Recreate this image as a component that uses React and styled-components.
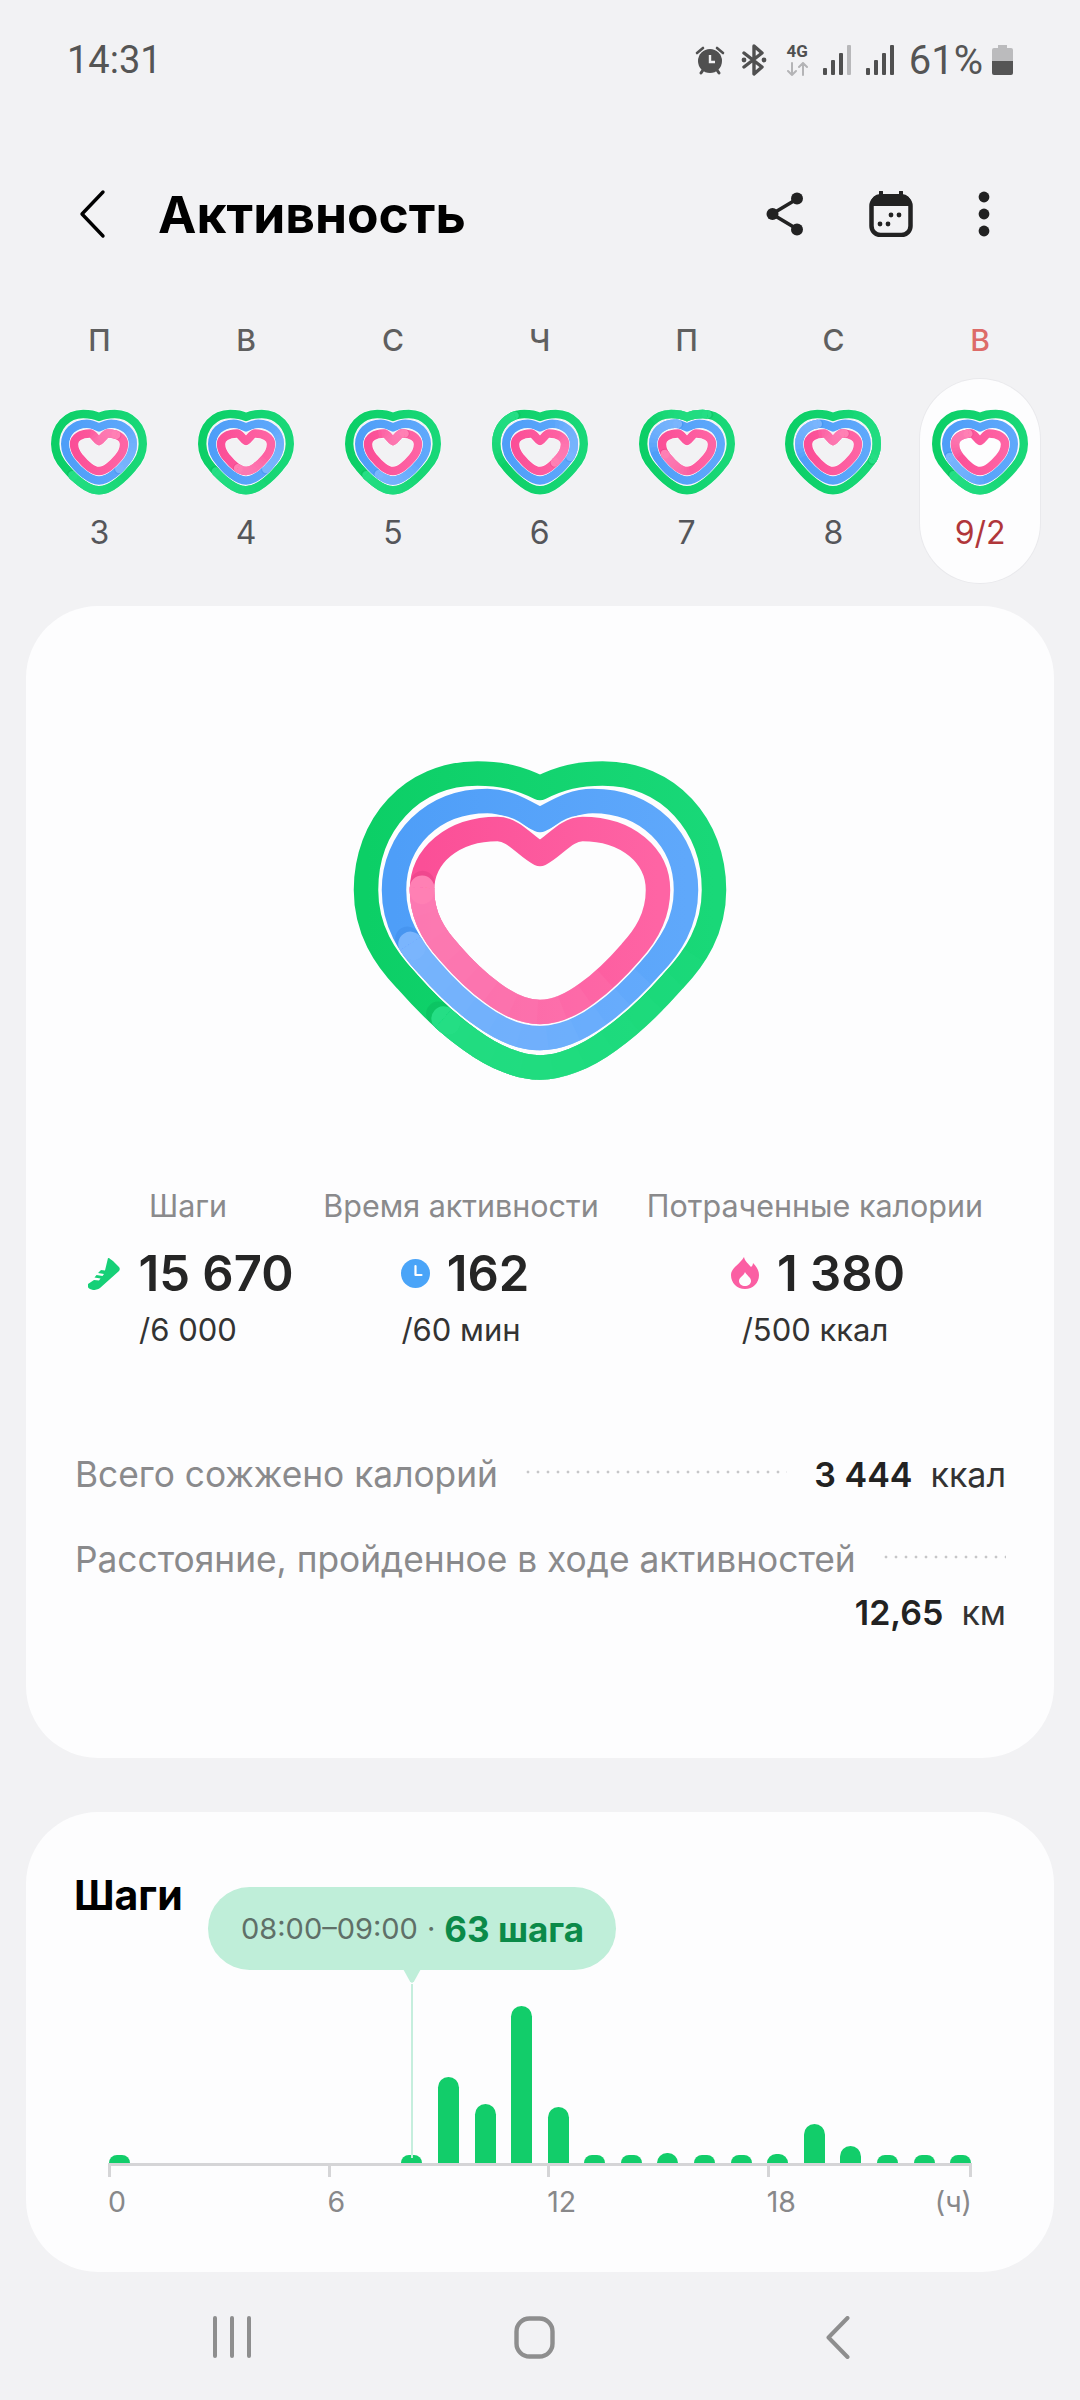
import React from "react";
import styled, { createGlobalStyle } from "styled-components";

const Global = createGlobalStyle`
  html, body { margin: 0; padding: 0; background: #f2f2f4; }
  body { font-family: Inter, "Noto Sans", sans-serif; }
`;

const Page = styled.div`
  width: 1080px;
  height: 2400px;
  overflow: hidden;
  background: #f2f2f4;
  display: flex;
  flex-direction: column;
`;

const StatusBar = styled.div`
  height: 120px;
  padding: 0 67px;
  display: flex;
  align-items: center;
  justify-content: space-between;
  color: #555;
`;

const Clock = styled.span`
  font-family: Roboto, sans-serif;
  font-size: 38px;
  font-weight: 400;
`;

const StatusIcons = styled.div`
  display: flex;
  align-items: center;
`;

const Percent = styled.span`
  font-family: Roboto, sans-serif;
  font-size: 40px;
  font-weight: 400;
  margin: 0 9px 0 15px;
`;

const Header = styled.div`
  margin-top: 34px;
  height: 120px;
  padding: 0 0 0 78px;
  display: flex;
  align-items: center;
`;

const Title = styled.h1`
  margin: 0 0 0 52px;
  font-size: 51.5px;
  line-height: 60px;
  font-weight: 700;
  color: #000;
  flex: 1;
`;

const HeaderIcons = styled.div`
  display: flex;
  align-items: center;
  gap: 65px;
  padding-right: 90px;
`;

const Week = styled.div`
  display: grid;
  grid-template-columns: repeat(7, 146.8px);
  padding: 0 0 0 26px;
`;

const DayCol = styled.div`
  display: flex;
  flex-direction: column;
  align-items: center;
`;

const DayLetter = styled.div`
  margin-top: 46px;
  height: 40px;
  line-height: 40px;
  font-size: 30px;
  font-weight: 500;
  color: ${(p) => (p.$red ? "#dd6b68" : "#5f5f5f")};
`;

const DayPill = styled.div`
  margin-top: 19px;
  width: 120px;
  height: 204px;
  box-sizing: border-box;
  padding-top: 30px;
  border-radius: 60px;
  display: flex;
  flex-direction: column;
  align-items: center;
  background: ${(p) => (p.$active ? "#fdfdfe" : "transparent")};
  box-shadow: ${(p) => (p.$active ? "0 0 0 1px #e9e9ec" : "none")};
`;

const DayNum = styled.div`
  margin-top: 18px;
  font-size: 32px;
  line-height: 40px;
  color: ${(p) => (p.$red ? "#b0363a" : "#55565a")};
`;

const Card = styled.div`
  margin: 23px 26px 0;
  height: 1152px;
  box-sizing: border-box;
  background: #fdfdfe;
  border-radius: 72px;
  padding-top: 124px;
  display: flex;
  flex-direction: column;
`;

const BigHeartWrap = styled.div`
  display: flex;
  justify-content: center;
  height: 370px;
`;

const Stats = styled.div`
  margin: 86px 0 0 42px;
  display: grid;
  grid-template-columns: 240px 306px 402px;
`;

const Stat = styled.div`
  display: flex;
  flex-direction: column;
  align-items: center;
`;

const StatLabel = styled.div`
  font-size: 30.5px;
  line-height: 40px;
  color: #8a8a8c;
  white-space: nowrap;
`;

const StatValue = styled.div`
  margin: 17px 0 0 ${(p) => p.$shift}px;
  height: 60px;
  display: flex;
  align-items: center;
  gap: ${(p) => p.$gap}px;
  font-size: 49px;
  font-weight: 600;
  color: #252525;
  white-space: nowrap;
`;

const StatGoal = styled.div`
  margin-top: 7px;
  font-size: 31px;
  line-height: 40px;
  color: #333;
`;

const Totals = styled.div`
  margin: 100px 48px 0 49px;
  display: flex;
  flex-direction: column;
  gap: 35px;
`;

const TotalRow = styled.div`
  display: flex;
  flex-wrap: wrap;
  align-items: flex-start;
  row-gap: 3px;
`;

const TotalLabel = styled.div`
  font-size: 35.3px;
  line-height: 50px;
  color: #8a8a8c;
  white-space: nowrap;
`;

const Dots = styled.div`
  flex: 1;
  height: 4px;
  margin: 20px 0 0 25px;
  min-width: 100px;
  background-image: radial-gradient(circle, #c6c6c8 1.2px, transparent 1.7px);
  background-size: 10px 4px;
`;

const TotalValue = styled.div`
  margin-left: auto;
  padding-left: 27px;
  display: flex;
  gap: 18px;
  font-size: 34px;
  line-height: 50px;
  color: #333;
  white-space: nowrap;
`;

const TotalNumber = styled.span`
  font-weight: 600;
  color: #222;
`;

const StepsCard = styled.div`
  position: relative;
  margin: 54px 26px 0;
  height: 460px;
  box-sizing: border-box;
  background: #fdfdfe;
  border-radius: 72px;
  padding: 58px 0 0 48px;
`;

const StepsTitle = styled.div`
  font-size: 41px;
  line-height: 50px;
  font-weight: 700;
  color: #000;
`;

const Tooltip = styled.div`
  position: absolute;
  left: 182px;
  top: 75px;
  width: 408px;
  height: 83px;
  box-sizing: border-box;
  padding-left: 33px;
  border-radius: 42px;
  background: #bfeed9;
  display: flex;
  align-items: center;
  white-space: nowrap;
  &::after {
    content: "";
    position: absolute;
    left: 194px;
    top: 80px;
    width: 20px;
    height: 16px;
    background: #bfeed9;
    clip-path: polygon(0 0, 100% 0, 60% 90%, 50% 100%, 40% 90%);
  }
`;

const TooltipTime = styled.span`
  font-size: 29px;
  color: #5f7068;
`;

const TooltipDot = styled.span`
  font-size: 29px;
  color: #5f7068;
  margin: 0 9px;
`;

const TooltipValue = styled.span`
  font-size: 35px;
  font-weight: 700;
  color: #0b8a49;
`;

const GuideLine = styled.div`
  position: absolute;
  left: 385px;
  top: 172px;
  width: 2px;
  height: 174px;
  background: #c5eedd;
`;

const Chart = styled.div`
  margin: 83px 0 0 27px;
  width: 878px;
`;

const Bars = styled.div`
  display: flex;
  align-items: flex-end;
  height: 160px;
`;

const BarCell = styled.div`
  width: 36.6px;
  display: flex;
  justify-content: center;
`;

const Bar = styled.div`
  width: 21px;
  border-radius: 11px 11px 0 0;
  background: #12cd6a;
`;

const Axis = styled.div`
  margin: 0 7px;
  border-top: 3px solid #d5d5d7;
  display: grid;
  grid-template-columns: repeat(3, 219.6px) 1fr;
`;

const AxisCell = styled.div`
  position: relative;
  height: 54px;
  display: flex;
  justify-content: space-between;
  align-items: flex-end;
  font-size: 28.5px;
  line-height: 36px;
  color: #88888a;
  &::before {
    content: "";
    position: absolute;
    left: 0;
    top: 0;
    width: 3px;
    height: 11px;
    background: #d5d5d7;
  }
`;

const EndTick = styled.div`
  position: absolute;
  right: 0;
  top: 0;
  width: 3px;
  height: 11px;
  background: #d5d5d7;
`;

const NavBar = styled.div`
  flex: 1;
  display: grid;
  grid-template-columns: repeat(3, 303px);
  padding: 44px 0 0 80px;
  box-sizing: border-box;
`;

const NavSlot = styled.div`
  display: flex;
  justify-content: center;
  align-items: flex-start;
`;

/* heart outline, starting at the notch and running left, down and back up */
const heartPath = (cx, hw, t, n, m, b) => {
  const x = (f) => (cx - hw * f).toFixed(1);
  const xr = (f) => (cx + hw * f).toFixed(1);
  const up = (f) => (t + (m - t) * f).toFixed(1);
  const dn = (f) => (m + (b - m) * f).toFixed(1);
  const nc = Math.max(t, n - hw * 0.06).toFixed(1);
  return [
    `M${cx} ${n}`,
    `C${x(0.12)} ${nc} ${x(0.22)} ${t} ${x(0.36)} ${t}`,
    `C${x(0.74)} ${t} ${x(1)} ${up(0.44)} ${x(1)} ${m}`,
    `C${x(1)} ${dn(0.225)} ${x(0.89)} ${dn(0.383)} ${x(0.77)} ${dn(0.507)}`,
    `C${x(0.66)} ${dn(0.63)} ${x(0.546)} ${dn(0.744)} ${x(0.4)} ${dn(0.845)}`,
    `C${x(0.26)} ${dn(0.946)} ${x(0.115)} ${b} ${cx} ${b}`,
    `C${xr(0.115)} ${b} ${xr(0.26)} ${dn(0.946)} ${xr(0.4)} ${dn(0.845)}`,
    `C${xr(0.546)} ${dn(0.744)} ${xr(0.66)} ${dn(0.63)} ${xr(0.77)} ${dn(0.507)}`,
    `C${xr(0.89)} ${dn(0.383)} ${xr(1)} ${dn(0.225)} ${xr(1)} ${m}`,
    `C${xr(1)} ${up(0.44)} ${xr(0.74)} ${t} ${xr(0.36)} ${t}`,
    `C${xr(0.22)} ${t} ${xr(0.12)} ${nc} ${cx} ${n}Z`,
  ].join(" ");
};

const ringColors = [
  { from: "#0ccf66", to: "#19d878", tip: "#25de85", shade: "#059a4c" },
  { from: "#4e9ef8", to: "#5fa8fb", tip: "#7ab5fd", shade: "#2f78d6" },
  { from: "#fb4f97", to: "#fe64a4", tip: "#ff80b4", shade: "#c92c73" },
];

const fadeSteps = [1, 2, 3, 4, 5, 6, 7, 8, 9, 10];

// the overlap of a ring that went past 100%: round head, tail fading into the ring
const Ring = ({ id, d, width, gap, color, cap, len }) => (
  <g>
    <linearGradient id={id} gradientUnits="objectBoundingBox" x1="0" x2="1" y1="0" y2="0">
      <stop offset="0" stopColor={color.from} />
      <stop offset="1" stopColor={color.to} />
    </linearGradient>
    <path d={d} fill="none" stroke="#fdfdfe" strokeWidth={width + gap * 2} strokeLinejoin="round" />
    <path d={d} fill="none" stroke={`url(#${id})`} strokeWidth={width} strokeLinejoin="round" />
    <path
      d={d}
      pathLength="100"
      fill="none"
      stroke={color.shade}
      strokeOpacity="0.22"
      strokeWidth={width}
      strokeLinecap="round"
      strokeDasharray="1 99"
      strokeDashoffset={-(cap - 0.7)}
    />
    <path
      d={d}
      pathLength="100"
      fill="none"
      stroke={color.tip}
      strokeWidth={width}
      strokeLinecap="round"
      strokeDasharray="0.6 99.4"
      strokeDashoffset={-cap}
    />
    {fadeSteps.map((k) => {
      const part = (len * k) / fadeSteps.length;
      return (
        <path
          key={k}
          d={d}
          pathLength="100"
          fill="none"
          stroke={color.tip}
          strokeOpacity="0.22"
          strokeWidth={width}
          strokeDasharray={`${part} ${100 - part}`}
          strokeDashoffset={-cap}
        />
      );
    })}
  </g>
);

const bigRings = [
  { d: heartPath(220, 174, 43.5, 58, 160, 337.5), cap: 39.2, len: 30 },
  { d: heartPath(220, 146, 71, 90, 160, 308), cap: 30.5, len: 34 },
  { d: heartPath(220, 118, 99, 124, 160, 282), cap: 23, len: 38 },
];

const BigHeart = () => (
  <svg width="440" height="370" viewBox="0 0 440 370">
    {bigRings.map((r, i) => (
      <Ring
        key={i}
        id={`big${i}`}
        d={r.d}
        width={24.5}
        gap={1.6}
        color={ringColors[i]}
        cap={r.cap}
        len={r.len}
      />
    ))}
  </svg>
);

const smallShapes = [
  heartPath(48, 43.8, 5, 8, 35, 81.3),
  heartPath(48, 33.8, 14.7, 18.5, 35, 71.5),
  heartPath(48, 25, 24.5, 32, 35, 62),
];

const days = [
  { l: "П", n: "3", caps: [38, 62, 86] },
  { l: "В", n: "4", caps: [36, 62, 44] },
  { l: "С", n: "5", caps: [38, 42, 90] },
  { l: "Ч", n: "6", caps: [10, 70, 62] },
  { l: "П", n: "7", caps: [92, 5, 30] },
  { l: "С", n: "8", caps: [70, 8, 90] },
  { l: "В", n: "9/2", caps: [38, 30, 10], active: true },
];

const SmallHeart = ({ index, caps }) => (
  <svg width="96" height="86" viewBox="0 0 96 86">
    {smallShapes.map((d, i) => (
      <Ring
        key={i}
        id={`s${index}-${i}`}
        d={d}
        width={8.4}
        gap={0.5}
        color={ringColors[i]}
        cap={caps[i]}
        len={22}
      />
    ))}
  </svg>
);

const Icon = styled.svg`
  display: block;
  flex: none;
`;

const AlarmIcon = () => (
  <Icon width="30" height="30" viewBox="0 0 30 30">
    <circle cx="15" cy="16" r="12" fill="#505050" />
    <path d="M15 10v7h5" fill="none" stroke="#f2f2f4" strokeWidth="2.4" />
    <path d="M2 8 8 3M28 8l-6-5" stroke="#505050" strokeWidth="2.6" strokeLinecap="round" />
    <path d="M6 28l2-3M24 28l-2-3" stroke="#505050" strokeWidth="3" strokeLinecap="round" />
  </Icon>
);

const BluetoothIcon = () => (
  <Icon width="26" height="34" viewBox="0 0 26 34" style={{ marginLeft: 16 }}>
    <path
      d="M3 10 21 24 13 31V3l8 7L3 24"
      fill="none"
      stroke="#505050"
      strokeWidth="3.4"
      strokeLinejoin="round"
      strokeLinecap="round"
    />
    <circle cx="3" cy="17" r="2.4" fill="#505050" />
    <circle cx="23" cy="17" r="2.4" fill="#505050" />
  </Icon>
);

const Net = styled.div`
  margin-left: 19px;
  width: 23px;
  display: flex;
  flex-direction: column;
  align-items: center;
`;

const NetText = styled.span`
  font-family: Roboto, sans-serif;
  font-size: 17px;
  line-height: 15px;
  font-weight: 700;
  color: #505050;
`;

const NetArrows = () => (
  <Icon width="23" height="14" viewBox="0 0 23 14" style={{ marginTop: 3 }}>
    <path
      d="M6 1v12M2 9l4 4 4-4M17 13V1M13 5l4-4 4 4"
      fill="none"
      stroke="#b4b4b6"
      strokeWidth="2"
      strokeLinecap="round"
    />
  </Icon>
);

const Signal = ({ faint, ml }) => (
  <Icon width="28" height="30" viewBox="0 0 28 30" style={{ marginLeft: ml }}>
    <rect x="0" y="23" width="4" height="7" rx="1" fill="#505050" />
    <rect x="8" y="15" width="4" height="15" rx="1" fill="#505050" />
    <rect x="16" y="8" width="4" height="22" rx="1" fill="#505050" />
    <rect x="24" y="0" width="4" height="30" rx="1" fill={faint ? "#b8b8ba" : "#505050"} />
  </Icon>
);

const Battery = () => (
  <Icon width="21" height="30" viewBox="0 0 21 30">
    <path d="M6 0h9v3h4a2 2 0 0 1 2 2v11H0V5a2 2 0 0 1 2-2h4z" fill="#bbbbbd" />
    <path d="M0 16h21v12a2 2 0 0 1-2 2H2a2 2 0 0 1-2-2z" fill="#555" />
  </Icon>
);

const BackIcon = () => (
  <Icon width="28" height="50" viewBox="0 0 28 50">
    <path d="M25 3 4 25l21 22" fill="none" stroke="#000" strokeWidth="3.4" strokeLinecap="round" strokeLinejoin="round" />
  </Icon>
);

const ShareIcon = () => (
  <Icon width="38" height="44" viewBox="0 0 38 44">
    <path d="M31 7 6 22l25 15" fill="none" stroke="#222" strokeWidth="3.6" />
    <circle cx="31" cy="6.5" r="6" fill="#222" />
    <circle cx="6.5" cy="22" r="6" fill="#222" />
    <circle cx="31" cy="37.5" r="6" fill="#222" />
  </Icon>
);

const CalendarIcon = () => (
  <Icon width="44" height="46" viewBox="0 0 44 46">
    <rect x="2.5" y="6" width="39" height="38" rx="9" fill="#f2f2f4" stroke="#222" strokeWidth="4.5" />
    <path d="M2 15V12a9 9 0 0 1 9-9h22a9 9 0 0 1 9 9v3z" fill="#222" />
    <path d="M12 1v7M32 1v7" stroke="#222" strokeWidth="4" strokeLinecap="round" />
    <circle cx="11" cy="33" r="2.4" fill="#222" />
    <circle cx="19" cy="33" r="2.4" fill="#222" />
    <circle cx="22" cy="24" r="2.4" fill="#222" />
    <circle cx="30" cy="24" r="2.4" fill="#222" />
  </Icon>
);

const MoreIcon = () => (
  <Icon width="12" height="46" viewBox="0 0 12 46">
    <circle cx="6" cy="6" r="5.4" fill="#222" />
    <circle cx="6" cy="23" r="5.4" fill="#222" />
    <circle cx="6" cy="40" r="5.4" fill="#222" />
  </Icon>
);

const ShoeIcon = () => (
  <Icon width="32" height="33" viewBox="7 5 32 33">
    <path
      d="M27 6c2 0 3 2 5 3l6 6c1 1 1 3 0 4L19 36c-2 1.500-5 2-7 2l-3-1c-2-1-3-3-2-5l6-4 5 .5 1.500-2-6-1 2-2.500 6 1 1.500-2-6-1 3-3 4 .5z"
      fill="#16d077"
    />
  </Icon>
);

const ClockIcon = () => (
  <Icon width="29" height="29" viewBox="0 0 29 29">
    <circle cx="14.5" cy="14.5" r="14.5" fill="#4aa4f8" />
    <path d="M14.5 7v9h6" fill="none" stroke="#fff" strokeWidth="2.2" strokeLinecap="round" strokeLinejoin="round" />
  </Icon>
);

const FlameIcon = () => (
  <Icon width="28" height="32" viewBox="0 0 28 32">
    <path
      d="M13 0c1 5 5 7 7 10 1-1 2-2 2-4 4 4 6 8 6 12 0 8-6 14-14 14S0 26 0 18C0 11 8 8 13 0z"
      fill="#fb5ea3"
    />
    <path d="M14 15c1 3 6 5 6 9 0 3-3 5-6 5s-6-2-6-5c0-4 5-5 6-9z" fill="#fdfdfe" />
  </Icon>
);

const NavBars = () => (
  <Icon width="38" height="42" viewBox="0 0 38 42">
    <path d="M2 2v38M19 2v38M36 2v38" stroke="#8e8e8e" strokeWidth="4" strokeLinecap="round" />
  </Icon>
);

const NavHome = () => (
  <Icon width="41" height="43" viewBox="0 0 41 43">
    <rect x="2.5" y="2.5" width="36" height="38" rx="13" fill="none" stroke="#8e8e8e" strokeWidth="4.4" />
  </Icon>
);

const NavBack = () => (
  <Icon width="24" height="43" viewBox="0 0 24 43">
    <path d="M21.5 2 2.5 21.5 21.5 41" fill="none" stroke="#8e8e8e" strokeWidth="4" strokeLinecap="round" strokeLinejoin="round" />
  </Icon>
);

const hours = [8, 0, 0, 0, 0, 0, 0, 0, 8, 86, 59, 157, 56, 8, 8, 10, 8, 8, 9, 39, 17, 8, 8, 8];

const App = () => (
  <Page>
    <Global />
    <StatusBar>
      <Clock>14:31</Clock>
      <StatusIcons>
        <AlarmIcon />
        <BluetoothIcon />
        <Net>
          <NetText>4G</NetText>
          <NetArrows />
        </Net>
        <Signal faint ml={14} />
        <Signal ml={15} />
        <Percent>61%</Percent>
        <Battery />
      </StatusIcons>
    </StatusBar>

    <Header>
      <BackIcon />
      <Title>Активность</Title>
      <HeaderIcons>
        <ShareIcon />
        <CalendarIcon />
        <MoreIcon />
      </HeaderIcons>
    </Header>

    <Week>
      {days.map((day, i) => (
        <DayCol key={i}>
          <DayLetter $red={day.active}>{day.l}</DayLetter>
          <DayPill $active={day.active}>
            <SmallHeart index={i} caps={day.caps} />
            <DayNum $red={day.active}>{day.n}</DayNum>
          </DayPill>
        </DayCol>
      ))}
    </Week>

    <Card>
      <BigHeartWrap>
        <BigHeart />
      </BigHeartWrap>
      <Stats>
        <Stat>
          <StatLabel>Шаги</StatLabel>
          <StatValue $gap={18} $shift={6}>
            <ShoeIcon />
            15 670
          </StatValue>
          <StatGoal>/6 000</StatGoal>
        </Stat>
        <Stat>
          <StatLabel>Время активности</StatLabel>
          <StatValue $gap={17} $shift={8}>
            <ClockIcon />
            162
          </StatValue>
          <StatGoal>/60 мин</StatGoal>
        </Stat>
        <Stat>
          <StatLabel>Потраченные калории</StatLabel>
          <StatValue $gap={18} $shift={6}>
            <FlameIcon />
            1 380
          </StatValue>
          <StatGoal>/500 ккал</StatGoal>
        </Stat>
      </Stats>
      <Totals>
        <TotalRow>
          <TotalLabel>Всего сожжено калорий</TotalLabel>
          <Dots />
          <TotalValue>
            <TotalNumber>3 444</TotalNumber>
            ккал
          </TotalValue>
        </TotalRow>
        <TotalRow>
          <TotalLabel>Расстояние, пройденное в ходе активностей</TotalLabel>
          <Dots />
          <TotalValue>
            <TotalNumber>12,65</TotalNumber>
            км
          </TotalValue>
        </TotalRow>
      </Totals>
    </Card>

    <StepsCard>
      <StepsTitle>Шаги</StepsTitle>
      <Tooltip>
        <TooltipTime>08:00–09:00</TooltipTime>
        <TooltipDot>·</TooltipDot>
        <TooltipValue>63 шага</TooltipValue>
      </Tooltip>
      <GuideLine />
      <Chart>
        <Bars>
          {hours.map((h, i) => (
            <BarCell key={i}>
              <Bar style={{ height: h }} />
            </BarCell>
          ))}
        </Bars>
        <Axis>
          <AxisCell>0</AxisCell>
          <AxisCell>6</AxisCell>
          <AxisCell>12</AxisCell>
          <AxisCell>
            18
            <span>(ч)</span>
            <EndTick />
          </AxisCell>
        </Axis>
      </Chart>
    </StepsCard>

    <NavBar>
      <NavSlot>
        <NavBars />
      </NavSlot>
      <NavSlot>
        <NavHome />
      </NavSlot>
      <NavSlot>
        <NavBack />
      </NavSlot>
    </NavBar>
  </Page>
);

export default App;
